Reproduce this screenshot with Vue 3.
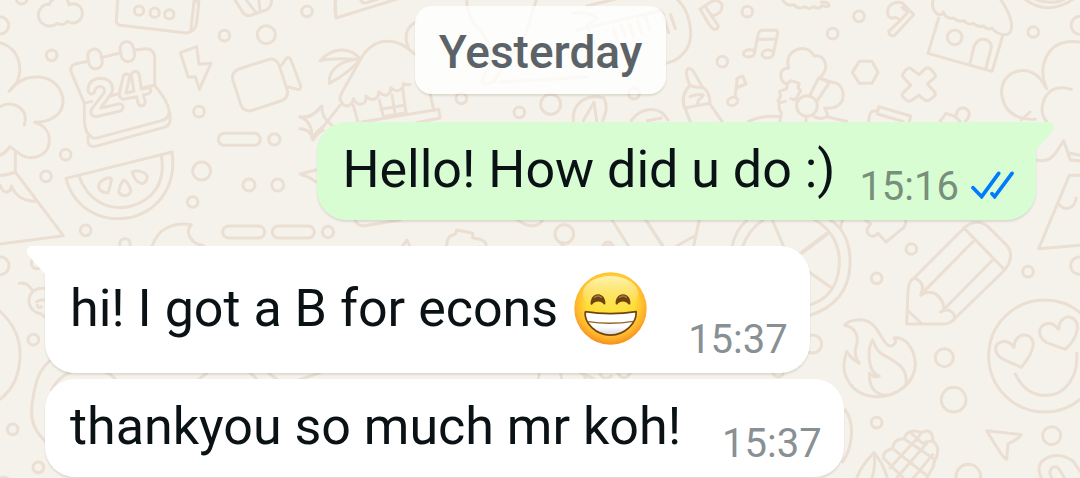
<script setup>
const messages = [
  { id: 1, side: 'out', tail: true, text: 'Hello! How did u do :)', time: '15:16', read: true },
  { id: 2, side: 'in', tail: true, text: 'hi! I got a B for econs', emoji: true, time: '15:37' },
  { id: 3, side: 'in', text: 'thankyou so much mr koh!', time: '15:37' }
]

// x, y, radius of the loose circles scattered over the wallpaper
const dots = [
  [65, -4, 16], [0, 76, 26], [155, 166, 16], [417, 32, 14], [464, 38, 14], [508, 43, 14],
  [673, 107, 16], [799, 104, 27], [921, 34, 16], [597, 335, 16], [823, 418, 17], [197, 464, 16],
  [138, 529, 16], [605, 513, 27], [747, 555, 18], [833, 555, 18], [578, 606, 16], [257, 691, 16],
  [375, 732, 16], [984, 696, 17], [1384, 295, 16], [1558, 337, 16], [1652, 313, 30], [1902, 281, 16],
  [2242, 35, 16], [2167, 185, 16], [2498, 101, 16], [2577, 49, 16], [3100, 96, 16], [3240, 76, 27],
  [2734, 747, 16], [2630, 835, 16], [3084, 815, 16], [3238, 797, 26], [2438, 1032, 27], [2833, 1073, 27],
  [2861, 1199, 37], [2630, 1268, 16], [3155, 1307, 27], [2905, 1430, 37], [1693, 702, 28], [1824, 742, 16],
  [0, 797, 27], [110, 790, 16], [100, 1019, 16], [38, 1288, 16], [115, 1402, 16], [10, 1460, 28],
  [2335, 1115, 16]
]
</script>

<template>
  <main class="chat">
    <svg class="wallpaper" viewBox="0 0 3240 1434" preserveAspectRatio="xMinYMin slice" aria-hidden="true">
      <circle v-for="(d, i) in dots" :key="i" :cx="d[0]" :cy="d[1]" :r="d[2]" />

      <g class="left">
        <path d="M148 12a33 33 0 1 0 0 66c10 0 17-2 24-8c10 6 22 4 30-6c20 12 45 0 45-24c0-22-20-34-40-26c-4-20-12-22-20-22M148 14c3-12 12-18 24-22" />
        <path d="M354-10L349 62q0 12 12 14L560 99q12 0 13-12L583-6M560 99c18-3 28-14 30-32L598-6M583 8L600-4" />
        <path d="M700-8L728 36q8 14 24 10L798 30q18-8 17-36M734-6L768 38M776-6L780 32" />
        <path d="M0 128C40 138 62 175 59 215q-2 16-7 30q-9 16-25 29C52 240 85 229 118 231c45 4 72 38 71 76c-2 36-36 60-85 60c28 8 44 28 44 54c0 50-56 62-86 43q-19-14-32-24q-12 18-30 26M0 320c35-20 75 2 76 35q0 10-3 20M46 456V516L190 707L0 732M46 516Q22 526 0 526M0 556q9 22 20 20q14-2 14-18q18 45 74 46" />
        <path d="M266 183L226 192q-20 7-11 27L253 310v50q2 44 25 53q10 2 20-1L484 362q22-6 24-26c-4-30-20-48-44-80V168q-4-22-26-22l-34 4M304 173L360 159M253 310L275 304M326 290L356 281M430 263L464 256M264 410v14q2 18 22 15L492 382q18-6 18-20V338" />
        <rect x="265" y="147" width="40" height="60" rx="20" transform="rotate(-10 285 177)" />
        <rect x="362" y="125" width="40" height="60" rx="20" transform="rotate(-10 382 155)" />
        <path d="M264 270q2-34 38-35q34 2 36 32q0 12-14 28L302 324L356 312q12-2 13 9q0 10-10 13L288 350q-14 0-16-13q0-8 6-14L311 280q8-16-8-20q-16-2-20 17q-8 12-19-3v-4" />
        <path d="M369 232q2-12 13-10q8 2 6 12L378 279L402 273L394 228q0-12 12-14q10 0 12 12L424 267L444 263q10 2 8 12q-2 7-22 10L436 304q0 12-10 14q-10 0-12-10L410 290L370 298q-14-4-12-18z" />
        <path d="M541 158L590 140L597 193L633 190L598 268L586 230L565 232z" />
        <rect x="707" y="190" width="146" height="130" rx="26" transform="rotate(-18 780 255)" />
        <path d="M844 196L860 174q8-4 13 6L902 258q2 12-9 10L866 261" />
        <path d="M1020 316L960 392M960 322Q936 352 900 352Q936 360 936 416Q950 394 966 382M900 522L948 510M904 524Q930 530 948 546" />
        <rect x="655" y="400" width="126" height="36" rx="18" />
        <rect x="668" y="678" width="126" height="36" rx="18" />
        <rect x="817" y="678" width="126" height="36" rx="18" />
        <path d="M198 535L516 456C530 556 478 630 394 652C300 672 220 620 198 535M236 526C262 600 320 632 386 620C462 602 498 546 484 466" />
        <path d="M334 540Q336 532 322 534C302 540 290 556 298 568Q308 580 324 578Q332 556 334 540M372 540Q360 550 356 576Q362 588 378 587Q392 582 393 572Q386 548 372 540M397 516Q400 512 412 513Q438 516 442 530Q440 550 424 551Q404 545 397 516" />
        <path d="M456 740Q470 698 500 684Q532 668 574 674Q558 690 570 712Q582 734 610 736" />
        <path d="M58 850q22-6 38 20M140 866c-40-6-58 20-52 45c4 18 14 26 34 30l20 16M110 905q20-12 30 0M112 916q4 12 12 4M0 934C40 970 62 1015 60 1070C58 1130 34 1172 0 1198M154 1078C116 1110 108 1140 98 1200C86 1270 110 1300 142 1330M154 1170C180 1120 230 1100 290 1108Q330 1116 350 1142M590 1142l30-22M750 1118l24 22l-20 2M804 1118l30 22M900 1138q44-14 60-20" />
      </g>

      <g class="middle" transform="translate(900 0)">
        <path d="M105-6L108 54L295-4M108 54q-6-30 0-56M180-6q4 18 20 14L235-3" />
        <path d="M120 300q-2-10 12-34L182 178c14-28 42-54 78-54c36 0 56 14 84 38M182 178C150 140 100 140 60 182C110 172 140 178 180 178C120 180 84 210 88 250Q140 222 178 182M346 66C318 84 312 112 326 144M120 292q4 24 18 26q20 0 22-22q12 20 26 16q14-4 12-24q14 14 26 9q14-6 12-22q18 16 28 8q10-8 8-20q12 12 24 8q16-6 14-20q12 6 20 2" />
        <path d="M160 316L174 366M238 300L250 350L318 338L308 266M276 286L286 346M242 328L312 316M390 280L402 332M186 366L416 328L420 354L350 368" />
        <path d="M0 350Q30 362 66 318Q62 350 96 376M0 386Q30 386 40 420Q50 400 70 390" />
        <path d="M820 362C816 310 860 280 912 294C924 320 918 340 908 362M850 362L882 306L890 362M994 362C1020 324 1078 312 1104 360M1042 362L1084 354" />
        <path d="M165 658q6 22 30 19L300 660M440 738q0-30 20-34q8 0 10-14L518 700v14q44 4 40 26M308 738l13-18l8 18M650 658q34 26 60 17q16-8 18-17M936 660L990 745M1036 658L1092 745M908 742q14-12 30 0" />
        <path d="M500-4c0 64 36 86 52 112c24 40 28 60 14 96q-36 50-4 48q24-2 34-32l80-116L710-4M820 40q50-8 70 16l-30 20l28 66l46 30M600 246l260-14M830 90l250-58M940 86l12 34M964 76l12 34M988 70l12 40M1012 60l12 38M1036 48l12 40M860 18L960-6" />
        <path d="M1088 38l18 60M1112 44l14 42M1130-4c36 34 42 80 42 110c-2 44-34 76-74 84" />
      </g>

      <g class="right" transform="translate(1980 0)">
        <path d="M120 27L156 4Q174-4 186 14Q188 36 168 44L155 48L174 76Q176 88 162 88Q156 86 148 74zM136 20L155 48M364-6q16 28 38 20q12 16 34 6q10 10 24 0q18 10 26-4q18 8 22 0q-6-12-24-10" />
        <ellipse cx="267" cy="160" rx="17" ry="11" transform="rotate(-8 267 160)" />
        <ellipse cx="323" cy="162" rx="17" ry="12" transform="rotate(-8 323 162)" />
        <path d="M283 160L295 100q4-9 13-9H346q8 0 7 10L340 162M292 118H350M225 292L231 242Q224 236 248 228L258 252L228 264" />
        <ellipse cx="218" cy="304" rx="16" ry="12" transform="rotate(-20 218 304)" />
        <path d="M90 256Q72 216 84 206Q94 204 100 214L128 262Q150 276 150 310L74 324Q60 286 90 256Q100 262 112 262L128 262M90 290q24-10 40-5q-4 8-12 12l-6 14M76 326L90 364M150 312L186 364" />
        <path d="M386 204C374 160 412 138 442 148Q458 158 462 168C488 162 502 190 496 208Q490 226 480 232M386 204Q356 206 364 236Q368 248 382 252M382 252L392 242L418 250L414 264L422 272L406 300L392 296M382 252l-2 14l-22 8l4 14l-8 14l8 6l14-4M356 306l2 22l6 10l-4 26M448 288L476 234L508 248L472 302M478 234L514 246C544 248 556 276 546 304Q532 328 494 324L504 346Q490 362 462 350M438 348V364M500 350L560 364M266 364Q306 344 364 350" />
        <circle cx="441" cy="318" r="31" />
        <path d="M577 217L598 184H636L654 217L636 250H598zM683 40C680 16 704 2 726 8L761 44L704 106Q690 112 686 94L722 60L706 52Q686 60 683 40M726 22L744 36L722 60" />
        <path d="M820-4c-8 24 4 44 16 48q16 0 14-8q8 22 30 18q18 14 32 8q12 14 28 8q16 14 30 8q14 14 26 6q14 20 40 20q22 0 18-36Q1050 38 1020-4" />
        <path d="M836 54L804 160L996 214L1028 108M930 190L942 140Q954 110 982 120Q1000 134 992 150L978 204" />
        <circle cx="884" cy="112" r="22" />
        <path d="M750 204L777 224L796 206Q804 200 812 208L824 222Q830 230 820 236L802 252L824 276Q830 284 820 292L804 302Q796 304 778 286L750 304Q742 304 730 292Q722 284 730 278L752 256L730 232Q724 224 732 218Q742 202 750 204" />
        <path d="M626 364Q628 336 638 334L652 332M656 320L752 348L748 364M656 320L652 342L730 364M840 364L858 340L886 350L894 330Q912 316 926 334Q932 350 916 364M886 350L900 364" />
        <path d="M1090-6Q1160 50 1240-2M1116-6Q1180 20 1220-6M1160 266C1136 220 1108 208 1080 212C1040 218 1020 250 1026 290Q1040 360 1126 358M1260 126Q1170 114 1150 196Q1144 230 1160 266M1234 268C1180 252 1150 280 1146 326Q1146 350 1160 364" />
      </g>

      <g class="lower-right" transform="translate(2400 330)">
        <path d="M664 30L690 6M708 150Q750 160 770 124L791 92L811 150L838 152M791 92L804 128L840 136M808 196L716 416L840 406M808 196H840M776 282Q790 298 804 295Q826 290 828 264" />
        <path d="M88 328C140 360 152 410 150 466C146 550 96 596 24 618M34 324C90 352 120 400 118 464C114 530 80 572 24 586M0 430L86 366M24 484L92 532M120 354L128 330" />
        <path d="M196 330L212 342Q194 360 206 374Q220 386 234 370L258 396L312 352Q320 340 316 330" />
        <path d="M320 642L324 540Q326 514 342 504L492 354Q530 322 564 350L620 406Q640 430 626 462L614 480L466 624Q450 642 430 642zM492 354L614 480M524 390L368 548M578 450L430 600M342 504Q362 510 368 530Q366 548 362 556Q382 540 408 552Q436 576 430 600L422 606Q440 594 456 606Q470 620 460 632M322 600L366 642" />
        <path d="M134 646Q142 632 170 630C230 624 236 680 262 704Q276 714 286 698Q290 690 282 684C314 680 342 710 346 760C346 822 286 862 226 860C150 856 124 790 134 748L140 724Q154 748 178 760Q160 736 168 712C178 680 168 652 134 646" />
        <path d="M218 690Q204 710 208 750Q212 790 238 798Q226 806 208 790Q206 854 264 856M218 690Q230 726 252 736C300 760 324 780 318 824" />
        <circle cx="734" cy="738" r="168" />
        <path d="M664 772L610 748Q576 726 592 702Q620 682 642 712Q644 678 672 674Q698 676 700 702Q698 732 664 772M796 718L740 698Q706 674 726 648Q752 628 776 658Q776 628 804 620Q834 624 832 656Q828 690 796 718M646 792C666 834 698 858 740 856C794 856 836 800 830 730" />
        <path d="M560 962L664 974Q660 984 624 1002L620 1048Q610 1044 592 1014z" />
        <path d="M136 900Q158 930 154 980Q148 1030 128 1056M170 1104Q184 1066 222 1028Q250 1060 262 1104M222 1028Q228 1070 216 1104M250 1044Q250 1020 278 1016Q280 986 312 986Q324 952 364 968Q396 950 400 994Q420 1010 410 1040Q400 1056 400 1070L380 1104M250 1044L310 1104M278 1016L380 1096M312 986L404 1048M330 966L368 1000Q390 990 400 994M270 1074L350 986M290 1104L380 1000M364 968L348 992M340 1104L398 1034" />
        <path d="M724 1104Q708 1072 728 1052Q772 1020 820 1054L840 1084M756 1104Q742 1084 758 1072Q772 1066 780 1082L794 1104" />
      </g>

      <g class="centre-right" transform="translate(1920 360)">
        <path d="M18 300L72 382M178 298L160 382M110 378L164 348M276 382Q286 330 320 302M308 380Q326 328 370 300M398 302L432 382M486 400L566 340" />
        <path d="M-180 758l42 18M-306 780l4-20M-238 762l4 18M-170 758l8 22M-120 762q14 22 34 6M-66 760q18 26 36 0M-220 390l-14-16" />
      </g>
    </svg>

    <time class="day">Yesterday</time>

    <article
      v-for="m in messages"
      :key="m.id"
      class="bubble"
      :class="[m.side, { tail: m.tail, media: m.emoji }]"
    >
      <svg v-if="m.tail" class="tip" viewBox="0 0 22 30" aria-hidden="true">
        <path d="M22 0H5Q-1 2 2 9L20 29H22z" />
      </svg>
      <p class="text">
        <span>{{ m.text }}</span>
        <svg v-if="m.emoji" class="emoji" viewBox="0 0 216 216" role="img" aria-label="Beaming face">
          <defs>
            <radialGradient id="face" cx=".5" cy=".43" r=".58">
              <stop offset="0" stop-color="#ffe63c" />
              <stop offset=".58" stop-color="#ffdc37" />
              <stop offset=".82" stop-color="#ffb52c" />
              <stop offset="1" stop-color="#f68a1c" />
            </radialGradient>
            <linearGradient id="shine" x2="0" y2="1">
              <stop offset="0" stop-color="#fff5b8" stop-opacity=".95" />
              <stop offset="1" stop-color="#f8dc62" stop-opacity=".15" />
            </linearGradient>
            <linearGradient id="teeth" x2="0" y2="1">
              <stop offset="0" stop-color="#fff" />
              <stop offset=".65" stop-color="#fff" />
              <stop offset="1" stop-color="#d5d5dc" />
            </linearGradient>
          </defs>
          <circle cx="108" cy="108" r="107" fill="url(#face)" />
          <ellipse cx="108" cy="64" rx="82" ry="52" fill="url(#shine)" />
          <g fill="#70430d">
            <path d="M49 93C50 76 59 65 72 66C85 67 93 79 93 92Q93 98 89 96C80 85 64 84 54 96Q49 98 49 93" />
            <path d="M123 92C123 79 132 66 145 66C158 66 167 77 167 92Q167 98 162 96C153 85 137 84 128 96Q123 98 123 92" />
          </g>
          <path d="M61 75q10-8 20 0M135 75q10-8 20 0" fill="none" stroke="#a57c50" stroke-width="4" stroke-linecap="round" />
          <path d="M33 117Q108 129 184 117C186 152 151 186 108 187C64 186 30 152 33 117" fill="url(#teeth)" stroke="#70430d" stroke-width="5" stroke-linejoin="round" />
          <path d="M42 147Q108 157 176 146" fill="none" stroke="#936522" stroke-width="4" />
        </svg>
      </p>
      <footer class="meta">
        <time>{{ m.time }}</time>
        <svg v-if="m.read" class="ticks" viewBox="28 30 129 84" role="img" aria-label="Read">
          <path d="M34 80L60 107L111 37M91 98L99 107L151 37" />
        </svg>
      </footer>
    </article>
  </main>
</template>

<style>
body {
  background: #f5f2eb;
}
</style>

<style scoped>
.chat {
  position: relative;
  box-sizing: border-box;
  min-height: 100vh;
  padding: 6px 44px 0 45px;
  display: flex;
  flex-direction: column;
  align-items: flex-start;
  overflow: hidden;
  background: #f5f2eb;
  color: #0b1216;
  font-family: Roboto, "Liberation Sans", sans-serif;
}
.wallpaper {
  position: absolute;
  inset: 0;
  width: 100%;
  height: 100%;
  fill: none;
  stroke: #eadfd2;
  stroke-width: 9;
  stroke-linecap: round;
  stroke-linejoin: round;
}
.day {
  position: relative;
  align-self: center;
  padding: 4px 24px 0;
  margin-bottom: 28px;
  border-radius: 17px;
  background: rgba(255, 255, 255, 0.8);
  box-shadow: 0 2px 2px rgba(60, 50, 30, 0.12);
  color: #5b6368;
  font-size: 46px;
  font-weight: 500;
  line-height: 84px;
}
.bubble {
  position: relative;
  display: flex;
  align-items: flex-end;
  gap: 41px;
  margin-bottom: 6px;
  padding: 0 22px 0 25px;
  border-radius: 30px;
  background: #fff;
  box-shadow: 0 2px 2px rgba(60, 50, 30, 0.12);
}
.bubble:last-child {
  margin-bottom: 0;
}
.out {
  align-self: flex-end;
  gap: 24px;
  margin-bottom: 26px;
  background: #d8fdd2;
}
.in.tail {
  border-top-left-radius: 0;
}
.out.tail {
  border-top-right-radius: 0;
}
.tip {
  position: absolute;
  top: 0;
  left: -19px;
  width: 22px;
  height: 30px;
  fill: #fff;
}
.out .tip {
  left: auto;
  right: -19px;
  transform: scaleX(-1);
  fill: #d8fdd2;
}
.text {
  display: flex;
  align-items: center;
  gap: 16px;
  margin: 0;
  padding: 17px 0 19px;
  font-size: 52px;
  line-height: 62px;
  white-space: nowrap;
}
.media .text {
  padding: 26px 0 28px;
}
.emoji {
  width: 73px;
  height: 73px;
}
.meta {
  display: flex;
  align-items: center;
  gap: 12px;
  padding-bottom: 10px;
  color: #899093;
  font-size: 40px;
  line-height: 46px;
}
.out .meta {
  color: #778f7b;
}
.ticks {
  width: 43px;
  height: 28px;
  margin-bottom: 4px;
  fill: none;
  stroke: #007bfc;
  stroke-width: 11;
  stroke-linecap: round;
  stroke-linejoin: miter;
}
</style>
